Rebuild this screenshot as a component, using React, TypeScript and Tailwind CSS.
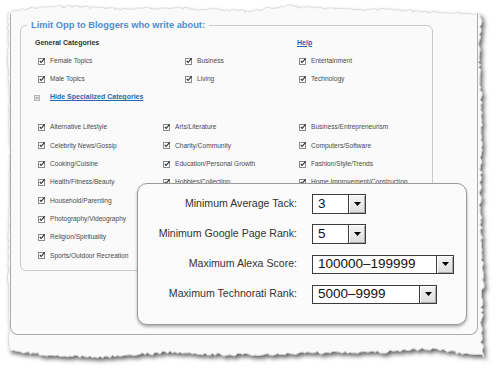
import React from "react";

type Pt = [number, number];

// deterministic noise so the torn edge looks the same every render
function rng(seed: number) {
  let s = seed;
  return () => {
    s = (s * 9301 + 49297) % 233280;
    return s / 233280;
  };
}

function tear(ctrl: Pt[], step: number, amp: number, seed: number): Pt[] {
  const r = rng(seed);
  const out: Pt[] = [];
  for (let i = 0; i < ctrl.length - 1; i++) {
    const [x0, y0] = ctrl[i];
    const [x1, y1] = ctrl[i + 1];
    const len = Math.hypot(x1 - x0, y1 - y0);
    const n = Math.max(1, Math.round(len / step));
    const nx = -(y1 - y0) / len;
    const ny = (x1 - x0) / len;
    for (let k = 0; k < n; k++) {
      const t = k / n;
      const d = (r() - 0.5) * 2 * amp;
      out.push([x0 + (x1 - x0) * t + nx * d, y0 + (y1 - y0) * t + ny * d]);
    }
  }
  return out;
}

const top: Pt[] = [[8, 13], [30, 8], [70, 6], [120, 9], [180, 8], [250, 11], [286, 6], [330, 9], [400, 10], [481, 14]];
const right: Pt[] = [[481, 14], [479, 60], [482, 120], [480, 200], [483, 280], [481, 340], [484, 356]];
const bottom: Pt[] = [[484, 356], [440, 350], [420, 349], [380, 352], [300, 353], [260, 355], [200, 354], [170, 352], [100, 357], [40, 354], [9, 350]];
const left: Pt[] = [[9, 350], [8, 250], [10, 150], [8, 60], [8, 13]];

const paperPath = (() => {
  const pts = [
    ...tear(top, 2.5, 1.3, 7),
    ...tear(right, 2.5, 1.4, 11),
    ...tear(bottom, 2.5, 1.5, 23),
    ...tear(left, 3, 0.8, 31),
  ];
  return "M" + pts.map(([x, y]) => `${x.toFixed(1)} ${y.toFixed(1)}`).join(" L") + " Z";
})();

const general = [
  ["Female Topics", "Business", "Entertainment"],
  ["Male Topics", "Living", "Technology"],
];

// rows below the fourth are covered by the filter panel in cols 2 and 3
const specialized = [
  ["Alternative Lifestyle", "Arts/Literature", "Business/Entrepreneurism"],
  ["Celebrity News/Gossip", "Charity/Community", "Computers/Software"],
  ["Cooking/Cuisine", "Education/Personal Growth", "Fashion/Style/Trends"],
  ["Health/Fitness/Beauty", "Hobbies/Collecting", "Home Improvement/Construction"],
  ["Household/Parenting", "", ""],
  ["Photography/Videography", "", ""],
  ["Religion/Spirituality", "", ""],
  ["Sports/Outdoor Recreation", "", ""],
];

function Check({ label }: { label: string }) {
  if (!label) return <div />;
  return (
    <div className="flex items-center gap-[4px] text-[6.6px] text-[#4a4a4a]">
      <svg width="8" height="8" viewBox="0 0 8 8" className="shrink-0">
        <rect x="0.5" y="1.5" width="6" height="6" fill="#fff" stroke="#8a8a8a" />
        <path d="M1.8 3.9 L3.1 5.5 L6.6 1.3" stroke="#222" strokeWidth="1.1" fill="none" />
      </svg>
      <span className="whitespace-nowrap">{label}</span>
    </div>
  );
}

function Select({ value, w, h }: { value: string; w: string; h: string }) {
  return (
    <div className={`flex ${w} ${h} border border-[#3c3c3c] bg-white`}>
      <span className="flex flex-1 items-center pl-[5px] text-[13.5px] leading-none text-[#111]">{value}</span>
      <span className="flex w-[17px] items-center justify-center border-l border-[#3c3c3c] bg-gradient-to-b from-[#f4f4f4] to-[#dcdcdc] shadow-[inset_1px_1px_0_#fff,inset_-1px_-1px_0_#aaa]">
        <svg width="7" height="4" viewBox="0 0 7 4">
          <path d="M0 0 H7 L3.5 4 Z" fill="#000" />
        </svg>
      </span>
    </div>
  );
}

const filters = [
  { label: "Minimum Average Tack:", value: "3", w: "w-[54px]", h: "h-[20px]" },
  { label: "Minimum Google Page Rank:", value: "5", w: "w-[54px]", h: "h-[20px]" },
  { label: "Maximum Alexa Score:", value: "100000–199999", w: "w-[142px]", h: "h-[19px]" },
  { label: "Maximum Technorati Rank:", value: "5000–9999", w: "w-[125px]", h: "h-[19px]" },
];

export default function App() {
  return (
    <div className="relative h-[375px] w-[499px] overflow-hidden bg-white font-['Liberation_Sans',Arial,sans-serif]">
      {/* torn paper backdrop */}
      <svg className="absolute inset-0" width="499" height="375">
        <defs>
          <filter id="shadow" x="-5%" y="-5%" width="112%" height="115%">
            <feDropShadow dx="2.5" dy="3" stdDeviation="2" floodColor="#000" floodOpacity="0.6" />
          </filter>
        </defs>
        <path d={paperPath} fill="#fafafa" stroke="#cfcfcf" strokeWidth="0.7" filter="url(#shadow)" />
      </svg>

      <div className="relative pl-[10px] pt-[14px]">
        <div className="h-[321px] w-[468px] rounded-b-[8px] border-x border-b border-[#ababab] pl-[9px] pt-[5px]">
          <fieldset className="h-[252px] w-[413px] rounded-[6px] border border-[#cacaca] pt-[3px]">
            <legend className="ml-[6px] px-[4px] text-[9.3px] font-bold leading-[12px] text-[#4a8fd2]">
              Limit Opp to Bloggers who write about:
            </legend>

            <div className="flex h-[18px] items-center pl-[14px] text-[7px] font-bold">
              <span className="w-[262px] text-[#333]">General Categories</span>
              <a className="text-[#2a66ad] underline">Help</a>
            </div>
            <div className="grid grid-cols-[147px_114px_1fr] auto-rows-[18px] pl-[17px]">
              {general.flat().map((g) => (
                <Check key={g} label={g} />
              ))}
            </div>
            <div className="flex h-[19px] items-center pl-[13px]">
              <svg width="6" height="6" viewBox="0 0 6 6" className="mr-[10px]">
                <rect x="0.5" y="0.5" width="5" height="5" fill="#e4e4e4" stroke="#b4b4b4" />
                <path d="M1.5 3 H4.5" stroke="#8a8a8a" />
              </svg>
              <a className="text-[7px] font-bold text-[#2a66ad] underline">Hide Specialized Categories</a>
            </div>
            <div className="mt-[11px] grid grid-cols-[125px_136px_1fr] auto-rows-[18.33px] pl-[17px]">
              {specialized.flat().map((s, i) => (
                <Check key={i} label={s} />
              ))}
            </div>
          </fieldset>
        </div>
      </div>

      {/* floating filter panel */}
      <div className="absolute left-[137px] top-[183px] h-[142px] w-[330px] rounded-[10px] border border-[#9b9b9b] bg-[#fbfbfb] pt-[5px] shadow-[0_2px_3px_rgba(0,0,0,0.3)]">
        <div className="grid grid-cols-[159px_auto] auto-rows-[30px] gap-x-[15px]">
          {filters.map((f) => (
            <React.Fragment key={f.label}>
              <div className="flex items-center justify-end text-[10.6px] text-[#333]">{f.label}</div>
              <div className="flex items-center">
                <Select value={f.value} w={f.w} h={f.h} />
              </div>
            </React.Fragment>
          ))}
        </div>
      </div>
    </div>
  );
}
